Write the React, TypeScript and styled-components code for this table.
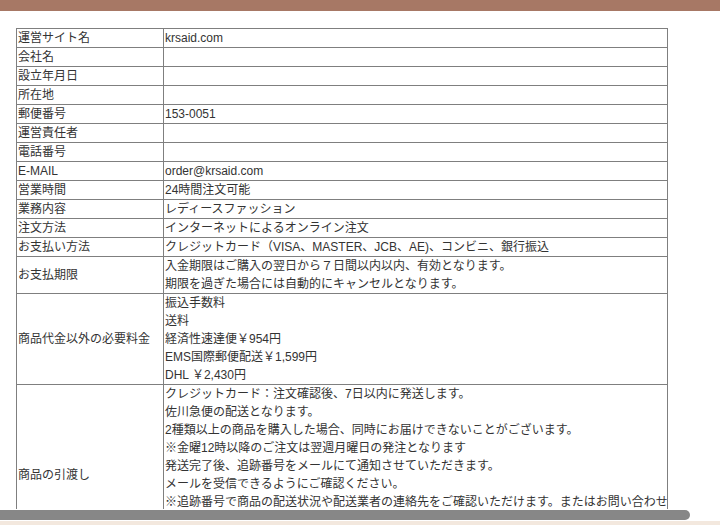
import React from "react";
import styled, { createGlobalStyle } from "styled-components";

const Global = createGlobalStyle`
  html, body { margin: 0; padding: 0; background: #fff; }
  body { font-family: "Liberation Sans", Arial, "Noto Sans CJK JP", sans-serif; color: #333; }
`;

const Page = styled.div`
  width: 720px;
  height: 525px;
  display: flex;
  flex-direction: column;
  overflow: hidden;
`;

const TopBar = styled.div`
  height: 11px;
  flex: none;
  background: #a77865;
`;

const Content = styled.div`
  flex: 1;
  overflow: hidden;
  padding: 17px 0 0 16px;
`;

const Table = styled.table`
  border-collapse: collapse;
  table-layout: fixed;
  width: 652px;
  font-size: 12px;
  line-height: 18px;
  font-family: "Liberation Sans", Arial, "Noto Sans CJK JP", sans-serif;
  color: #333;
`;

const LabelCol = styled.col`
  width: 147px;
`;

const Label = styled.td`
  border: 1px solid #7f7f7f;
  padding: 0 1px;
  vertical-align: middle;
  white-space: nowrap;
`;

const Value = styled.td<{ $height?: number }>`
  border: 1px solid #7f7f7f;
  padding: 0 1px;
  vertical-align: ${(p) => (p.$height ? "top" : "middle")};
  white-space: nowrap;
  overflow: hidden;
  height: ${(p) => p.$height ?? 18}px;
`;

const Line = styled.div`
  height: 18px;
`;

const ScrollTrack = styled.div`
  height: 12px;
  flex: none;
  display: flex;
  align-items: center;
  background: #fff;
`;

const ScrollThumb = styled.div`
  width: 690px;
  height: 10px;
  background: #878787;
  border-radius: 0 5px 5px 0;
`;

const Footer = styled.div`
  height: 4px;
  flex: none;
  background: #f3e8de;
`;

type Row = { label: string; lines: string[]; height?: number };

const rows: Row[] = [
  { label: "運営サイト名", lines: ["krsaid.com"] },
  { label: "会社名", lines: [] },
  { label: "設立年月日", lines: [] },
  { label: "所在地", lines: [] },
  { label: "郵便番号", lines: ["153-0051"] },
  { label: "運営責任者", lines: [] },
  { label: "電話番号", lines: [] },
  { label: "E-MAIL", lines: ["order@krsaid.com"] },
  { label: "営業時間", lines: ["24時間注文可能"] },
  { label: "業務内容", lines: ["レディースファッション"] },
  { label: "注文方法", lines: ["インターネットによるオンライン注文"] },
  { label: "お支払い方法", lines: ["クレジットカード（VISA、MASTER、JCB、AE)、コンビニ、銀行振込"] },
  {
    label: "お支払期限",
    lines: [
      "入金期限はご購入の翌日から７日間以内以内、有効となります。",
      "期限を過ぎた場合には自動的にキャンセルとなります。",
    ],
  },
  {
    label: "商品代金以外の必要料金",
    lines: ["振込手数料", "送料", "経済性速達便￥954円", "EMS国際郵便配送￥1,599円", "DHL ￥2,430円"],
  },
  {
    label: "商品の引渡し",
    height: 180,
    lines: [
      "クレジットカード：注文確認後、7日以内に発送します。",
      "佐川急便の配送となります。",
      "2種類以上の商品を購入した場合、同時にお届けできないことがございます。",
      "※金曜12時以降のご注文は翌週月曜日の発注となります",
      "発送完了後、追跡番号をメールにて通知させていただきます。",
      "メールを受信できるようにご確認ください。",
      "※追跡番号で商品の配送状況や配送業者の連絡先をご確認いただけます。またはお問い合わせ",
    ],
  },
];

export default function App() {
  return (
    <>
      <Global />
      <Page>
        <TopBar />
        <Content>
          <Table>
            <colgroup>
              <LabelCol />
              <col />
            </colgroup>
            <tbody>
              {rows.map((r) => (
                <tr key={r.label}>
                  <Label>{r.label}</Label>
                  <Value $height={r.height}>
                    {r.lines.map((l, i) => (
                      <Line key={i}>{l}</Line>
                    ))}
                  </Value>
                </tr>
              ))}
            </tbody>
          </Table>
        </Content>
        <ScrollTrack>
          <ScrollThumb />
        </ScrollTrack>
        <Footer />
      </Page>
    </>
  );
}
